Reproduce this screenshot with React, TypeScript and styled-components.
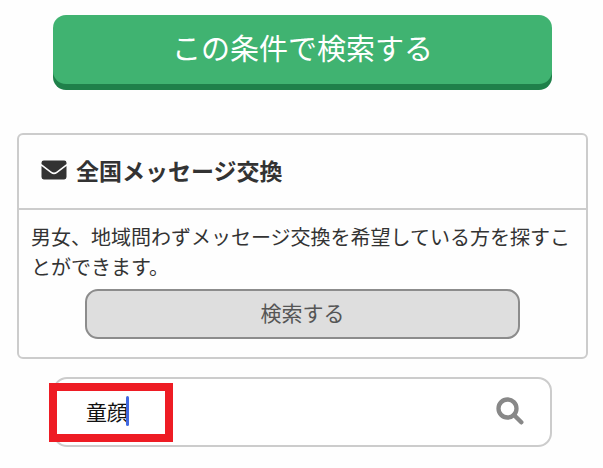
import React, { useState } from "react";
import styled, { createGlobalStyle } from "styled-components";

const GlobalStyle = createGlobalStyle`
  *, *::before, *::after { box-sizing: border-box; }
  body {
    margin: 0;
    background: #fefefe;
    color: #333;
    font-family: "Noto Sans CJK JP", "Noto Sans", sans-serif;
  }
  button, input { font: inherit; }
`;

const Page = styled.main`
  display: flex;
  flex-direction: column;
  padding: 15px 15px 22px 17px;
`;

const PrimaryButton = styled.button`
  margin: 0 36px;
  padding: 11px 0 16px;
  border: 0;
  border-radius: 13px;
  box-shadow: 0 6px 0 #1f804a;
  background: #40b371;
  color: #fff;
  font-size: 29px;
  line-height: 42px;
  cursor: pointer;
`;

const Card = styled.section`
  margin-top: 49px;
  border: 2px solid #ccc;
  border-radius: 6px;
`;

const CardHeader = styled.header`
  display: flex;
  align-items: center;
  gap: 9px;
  padding: 18px 22px 21px;
  border-bottom: 2px solid #ccc;
`;

const CardTitle = styled.h2`
  margin: 0;
  font-size: 23px;
  font-weight: 700;
  line-height: 34px;
`;

const CardBody = styled.div`
  display: flex;
  flex-direction: column;
  padding: 12px 12px 18px;
`;

const Description = styled.p`
  margin: 0;
  font-size: 20px;
  line-height: 30px;
`;

const SecondaryButton = styled.button`
  margin: 7px 54px 0;
  padding: 6px 0 10px;
  border: 2px solid #8c8c8c;
  border-radius: 13px;
  background: #dedede;
  color: #555;
  font-size: 21px;
  line-height: 30px;
  cursor: pointer;
`;

const SearchForm = styled.form`
  position: relative;
  display: flex;
  align-items: center;
  margin: 18px 36px 0;
  padding: 17px 26px 19px 31px;
  border: 2px solid #ccc;
  border-radius: 14px;
  background: #fff;
`;

const SearchField = styled.div`
  flex: 1;
  display: flex;
  align-items: center;
`;

const SearchInput = styled.input`
  field-sizing: content;
  min-width: 0;
  padding: 0;
  border: 0;
  outline: 0;
  background: transparent;
  color: #111;
  font-size: 21px;
  line-height: 30px;
`;

const Caret = styled.span`
  width: 3px;
  height: 30px;
  margin-left: -2px;
  border-radius: 2px;
  background: #4169e1;
`;

const IconButton = styled.button`
  display: flex;
  padding: 0;
  border: 0;
  background: transparent;
  color: #888;
  cursor: pointer;
`;

const Highlight = styled.div`
  position: absolute;
  top: 4px;
  left: -6px;
  width: 124px;
  height: 59px;
  border: 8px solid #ee1c24;
  pointer-events: none;
`;

function EnvelopeIcon() {
  return (
    <svg width="26" height="20" viewBox="0 0 26 20" fill="currentColor" aria-hidden="true">
      <path d="M2.8 0.5h20.4a2.3 2.3 0 0 1 2.3 2.3v1.1l-9.8 7.6a4.4 4.4 0 0 1-5.4 0L0.5 3.9v-1.1A2.3 2.3 0 0 1 2.8 0.5z" />
      <path d="M0.5 5.9l9.2 7.2a5.4 5.4 0 0 0 6.6 0l9.2-7.2v11.2a2.3 2.3 0 0 1-2.3 2.3H2.8a2.3 2.3 0 0 1-2.3-2.3z" />
    </svg>
  );
}

function SearchIcon() {
  return (
    <svg width="28" height="28" viewBox="0 0 28 28" fill="none" stroke="currentColor" aria-hidden="true">
      <circle cx="11.5" cy="11.5" r="9" strokeWidth="4.3" />
      <path d="M18 18l7.3 7.3" strokeWidth="4.4" strokeLinecap="round" />
    </svg>
  );
}

export default function App() {
  const [query, setQuery] = useState("童顔");
  return (
    <>
      <GlobalStyle />
      <Page>
        <PrimaryButton type="button">この条件で検索する</PrimaryButton>
        <Card>
          <CardHeader>
            <EnvelopeIcon />
            <CardTitle>全国メッセージ交換</CardTitle>
          </CardHeader>
          <CardBody>
            <Description>
              男女、地域問わずメッセージ交換を希望している方を探すことができます。
            </Description>
            <SecondaryButton type="button">検索する</SecondaryButton>
          </CardBody>
        </Card>
        <SearchForm role="search" onSubmit={(e) => e.preventDefault()}>
          <SearchField>
            <SearchInput
              type="text"
              aria-label="キーワード"
              value={query}
              onChange={(e) => setQuery(e.target.value)}
            />
            <Caret />
          </SearchField>
          <IconButton type="submit" aria-label="検索">
            <SearchIcon />
          </IconButton>
          <Highlight />
        </SearchForm>
      </Page>
    </>
  );
}
